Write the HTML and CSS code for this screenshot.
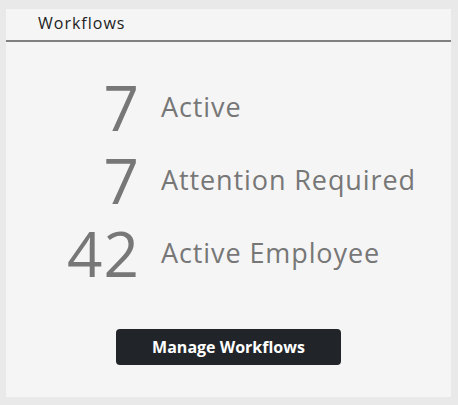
FILE: index.html
```html
<!DOCTYPE html>
<html>

<head>
    <meta charset="UTF-8">
    <meta name="viewport" content="width=device-width, initial-scale=1.0">
    <title>Workflows</title>
    <link rel="stylesheet" href="styles.css">
</head>

<body>
    <div class="card">
        <div class="card-header">Workflows</div>
        <div class="stats">
            <div class="stat-row">
                <span class="stat-number">7</span>
                <span class="stat-label">Active</span>
            </div>
            <div class="stat-row">
                <span class="stat-number">7</span>
                <span class="stat-label">Attention Required</span>
            </div>
            <div class="stat-row">
                <span class="stat-number">42</span>
                <span class="stat-label">Active Employee</span>
            </div>
        </div>
        <div class="actions">
            <button class="manage-button">Manage Workflows</button>
        </div>
    </div>
</body>

</html>
```
FILE: styles.css
```css
body {
    margin: 0;
    padding: 9px 7px 8px 6px;
    background-color: #e9e9e9;
    font-family: "Open Sans", Arial, sans-serif;
}

.card {
    background-color: #f5f5f5;
    height: 388px;
    box-sizing: border-box;
}

.card-header {
    height: 33px;
    box-sizing: border-box;
    padding: 3px 0 0 32px;
    font-size: 16px;
    letter-spacing: 1px;
    color: #222;
    border-bottom: 2px solid #808080;
}

.stats {
    padding-top: 28px;
}

.stat-row {
    display: grid;
    grid-template-columns: 134px 1fr;
    column-gap: 21px;
    align-items: center;
    height: 73px;
}

.stat-number {
    text-align: right;
    font-size: 62px;
    letter-spacing: 1px;
    line-height: 1;
    color: #777;
}

.stat-label {
    font-size: 27px;
    letter-spacing: 0.9px;
    color: #777;
}

.actions {
    display: flex;
    justify-content: center;
    padding-top: 40px;
}

.manage-button {
    width: 225px;
    height: 36px;
    border: none;
    border-radius: 4px;
    background-color: #212529;
    color: white;
    font-family: "Open Sans", Arial, sans-serif;
    font-size: 16px;
    font-weight: bold;
    cursor: pointer;
}
```
